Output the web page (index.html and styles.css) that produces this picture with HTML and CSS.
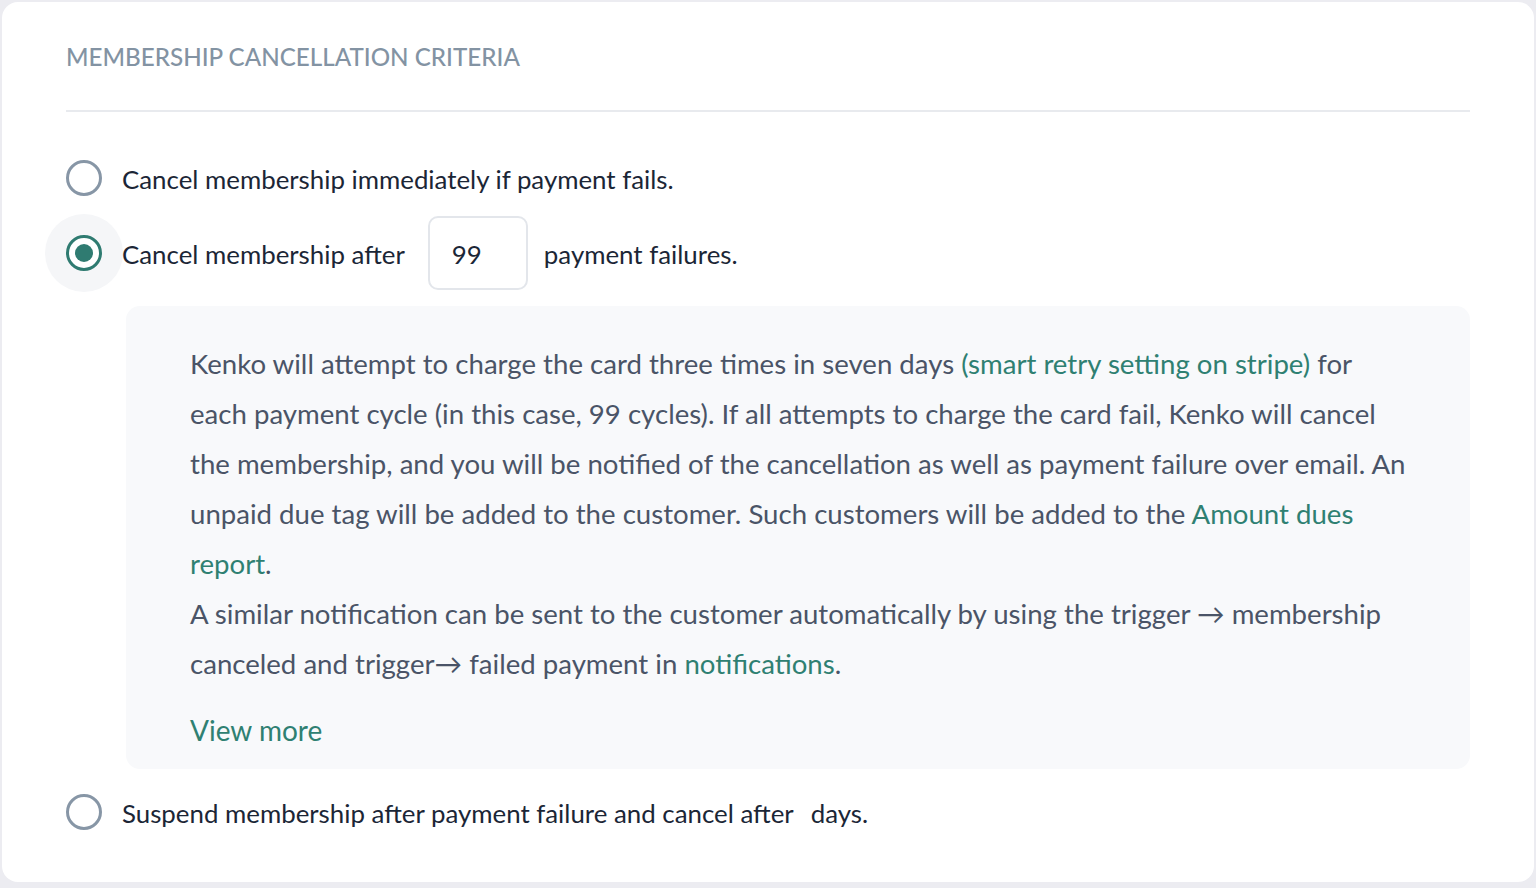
FILE: index.html
```html
<!DOCTYPE html>
<html lang="en">
<head>
<meta charset="utf-8">
<title>Membership cancellation criteria</title>
<link rel="stylesheet" href="styles.css">
</head>
<body>
<section class="card">
  <header class="card-header">
    <h2 class="card-title">MEMBERSHIP CANCELLATION CRITERIA</h2>
  </header>
  <div class="options">
    <label class="option">
      <span class="radio"></span>
      <span class="option-text">Cancel membership immediately if payment fails.</span>
    </label>
    <label class="option option-input">
      <span class="radio radio-checked"></span>
      <span class="option-text">Cancel membership after</span>
      <span class="count-input">99</span>
      <span class="option-text">payment failures.</span>
    </label>
    <div class="info">
      <p class="info-text">Kenko will attempt to charge the card three times in seven days <a class="link" href="#">(smart retry setting on stripe)</a> for each payment cycle (in this case, 99 cycles). If all attempts to charge the card fail, Kenko will cancel the membership, and you will be notified of the cancellation as well as payment failure over email. An unpaid due tag will be added to the customer. Such customers will be added to the <a class="link" href="#">Amount dues report</a>.</p>
      <p class="info-text">A similar notification can be sent to the customer automatically by using the trigger → membership canceled and trigger→ failed payment in <a class="link" href="#">notifications</a>.</p>
      <a class="view-more" href="#">View more</a>
    </div>
    <label class="option option-last">
      <span class="radio"></span>
      <span class="option-text">Suspend membership after payment failure and cancel after<span class="blank"></span>days.</span>
    </label>
  </div>
</section>
</body>
</html>
```
FILE: styles.css
```css
* { box-sizing: border-box; }
html, body { margin: 0; padding: 0; }
body {
  background: #ececf1;
  font-family: Lato, "Open Sans", sans-serif;
  color: #1b2636;
}
.card {
  position: relative;
  z-index: 0;
  margin: 2px 2px 0;
  height: 880px;
  background: #ffffff;
  border-radius: 16px;
  padding: 0 64px;
}
.card-header {
  height: 110px;
  display: flex;
  align-items: center;
  border-bottom: 2px solid #e8eaee;
}
.card-title {
  margin: 0;
  font-size: 24.2px;
  font-weight: 500;
  color: #8393a3;
}
.options {
  display: flex;
  flex-direction: column;
  padding-top: 41px;
}
.option {
  display: flex;
  align-items: center;
  height: 50px;
  font-size: 25.85px;
  cursor: pointer;
}
.option-input {
  height: 74px;
  margin-top: 13px;
}
.option-last {
  margin-top: 18px;
}
.radio {
  position: relative;
  width: 36px;
  height: 36px;
  flex: none;
  border: 3px solid #8796a6;
  border-radius: 50%;
  margin-right: 20px;
  background: #ffffff;
}
.radio-checked {
  border-color: #2f7b71;
  display: flex;
  align-items: center;
  justify-content: center;
}
.radio-checked::before {
  content: "";
  position: absolute;
  left: 50%;
  top: 50%;
  width: 78px;
  height: 78px;
  margin: -39px 0 0 -39px;
  border-radius: 50%;
  background: #f5f6f8;
  z-index: -1;
}
.radio-checked::after {
  content: "";
  width: 18px;
  height: 18px;
  border-radius: 50%;
  background: #2f7b71;
}
.option-text {
  white-space: nowrap;
  padding-top: 2px;
}
.count-input {
  width: 100px;
  height: 74px;
  margin: 0 16px 0 23px;
  border: 2px solid #e3e6eb;
  border-radius: 10px;
  display: flex;
  align-items: center;
  padding-left: 22px;
  padding-top: 2px;
  font-size: 25.85px;
  background: #ffffff;
}
.info {
  margin: 16px 0 0 60px;
  background: #f8f9fb;
  border-radius: 14px;
  padding: 33px 64px 19px;
}
.info-text {
  margin: 0;
  font-size: 27.6px;
  line-height: 50px;
  color: #4a5467;
}
.link {
  color: #2f8072;
  text-decoration: none;
}
.view-more {
  display: block;
  margin-top: 21px;
  font-size: 28px;
  line-height: 40px;
  color: #2f8072;
  text-decoration: none;
}
.blank {
  display: inline-block;
  width: 17px;
}
```
